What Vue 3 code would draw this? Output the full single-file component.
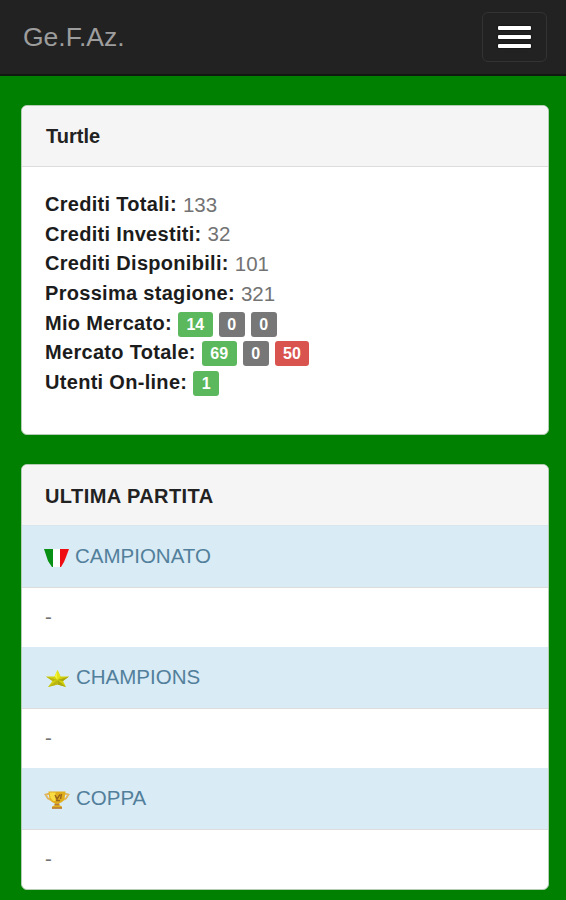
<script setup>
import { ref } from 'vue'

const squadra = ref('Turtle')

const crediti = ref([
  { id: 'totali', label: 'Crediti Totali:', valore: 133 },
  { id: 'investiti', label: 'Crediti Investiti:', valore: 32 },
  { id: 'disponibili', label: 'Crediti Disponibili:', valore: 101 },
  { id: 'stagione', label: 'Prossima stagione:', valore: 321 }
])

const mercato = ref([
  {
    id: 'mio',
    label: 'Mio Mercato:',
    badges: [
      { tipo: 'success', valore: 14 },
      { tipo: 'default', valore: 0 },
      { tipo: 'default', valore: 0 }
    ]
  },
  {
    id: 'totale',
    label: 'Mercato Totale:',
    badges: [
      { tipo: 'success', valore: 69 },
      { tipo: 'default', valore: 0 },
      { tipo: 'danger', valore: 50 }
    ]
  },
  {
    id: 'utenti',
    label: 'Utenti On-line:',
    badges: [{ tipo: 'success', valore: 1 }]
  }
])

const partite = ref([
  { id: 'campionato', nome: 'CAMPIONATO', risultato: '-' },
  { id: 'champions', nome: 'CHAMPIONS', risultato: '-' },
  { id: 'coppa', nome: 'COPPA', risultato: '-' }
])
</script>

<template>
  <nav class="navbar">
    <a class="brand">Ge.F.Az.</a>
    <button class="toggle" aria-label="Menu">
      <span class="icon-bar"></span>
      <span class="icon-bar"></span>
      <span class="icon-bar"></span>
    </button>
  </nav>

  <main class="container">
    <section class="panel">
      <h3 class="panel-heading squadra">{{ squadra }}</h3>
      <div class="panel-body">
        <div v-for="c in crediti" :key="c.id" class="riga">
          <strong>{{ c.label }}</strong>
          <span class="valore">{{ c.valore }}</span>
        </div>
        <div v-for="m in mercato" :key="m.id" class="riga">
          <strong>{{ m.label }}</strong>
          <span class="badges">
            <span v-for="(b, i) in m.badges" :key="i" class="badge" :class="b.tipo">{{ b.valore }}</span>
          </span>
        </div>
      </div>
    </section>

    <section class="panel">
      <h3 class="panel-heading ultima">ULTIMA PARTITA</h3>
      <template v-for="p in partite" :key="p.id">
        <div class="torneo" :class="p.id">
          <!-- scudetto -->
          <svg v-if="p.id === 'campionato'" class="icona" viewBox="0 0 26 20">
            <path d="M0 1H9V19H8L4 13L2 7Z" fill="#079013" />
            <path d="M9 1H16V19H9Z" fill="#fff" />
            <path d="M16 1H25L22 9L20 14L17 19H16Z" fill="#f00d12" />
          </svg>
          <!-- stella -->
          <svg v-else-if="p.id === 'champions'" class="icona" viewBox="0 0 26 20">
            <path d="M13.5 1L16.5 7.5H25L19 12L22 18L13.5 15.5L4 18L8.5 12L2 7.5H10.5Z" fill="#d2d20c" />
            <path d="M13.5 1V11L10.5 7.5Z" fill="#f4f43a" />
            <path d="M13.5 1L16.5 7.5L13.5 11Z" fill="#e4e31c" />
            <path d="M25 7.5L13.5 11L19 12ZM13.5 11L22 18L13.5 15.5Z" fill="#aaa70f" />
            <path d="M2 7.5L13.5 11L8.5 12ZM13.5 11L4 18L13.5 15.5Z" fill="#bab512" />
          </svg>
          <!-- coppa -->
          <svg v-else class="icona" viewBox="0 0 26 20">
            <path d="M6 3.5L1.5 4.5L4 8.5L9 11M20 3.5L24.5 4.5L22 8.5L17 11" fill="none" stroke="#e0b560" stroke-width="1.8" />
            <path d="M4.5 1.5H21.5L20.5 9L18 12L15 13.5V15L18 16.5V18.5H8V16.5L11 15V13.5L8 12L5.5 9Z" fill="#e0ae1c" />
            <path d="M5.5 2.5H11.5V11H9L6.5 8Z" fill="#f8dc42" />
            <path d="M11 5L13 9L16 4.5M12 10.5H16M17.5 4L16.5 9" fill="none" stroke="#98651c" stroke-width="1.4" />
            <path d="M10.5 14.5H15.5M8 18H18" stroke="#b5793f" stroke-width="1.4" />
          </svg>
          <span>{{ p.nome }}</span>
        </div>
        <div class="risultato">{{ p.risultato }}</div>
      </template>
    </section>
  </main>
</template>

<style>
body {
  margin: 0;
  background: #008000;
}
</style>

<style scoped>
.navbar {
  box-sizing: border-box;
  height: 76px;
  padding: 0 19px 0 23px;
  display: flex;
  align-items: center;
  justify-content: space-between;
  background: #222;
  border-bottom: 2px solid #101810;
  font-family: "Liberation Sans", Arial, sans-serif;
}
.brand {
  color: #9d9d9d;
  font-size: 26.5px;
  line-height: 30px;
}
.toggle {
  box-sizing: border-box;
  width: 65px;
  height: 50px;
  padding: 0;
  display: flex;
  flex-direction: column;
  align-items: center;
  justify-content: center;
  gap: 5px;
  background: transparent;
  border: 1.5px solid #333;
  border-radius: 6px;
}
.icon-bar {
  width: 33px;
  height: 4px;
  border-radius: 1px;
  background: #fff;
  box-shadow: 0 0 2px #000;
}
.container {
  padding: 29px 17px 0 21px;
  font-family: "Liberation Sans", Arial, sans-serif;
  font-size: 20.5px;
  color: #737373;
}
.panel {
  box-sizing: border-box;
  margin-bottom: 29px;
  overflow: hidden;
  border: 1px solid #b5cdb5;
  border-radius: 6px;
  background: #fff;
}
.panel-heading {
  box-sizing: border-box;
  height: 61px;
  margin: 0;
  padding: 0 24px;
  background: #f5f5f5;
  border-bottom: 1px solid #ddd;
  color: #222;
  font-size: 20px;
  line-height: 61px;
}
.ultima {
  padding: 0 23px;
  border-bottom-color: #d9e5ec;
  letter-spacing: 0.43px;
  line-height: 63px;
}
.panel-body {
  box-sizing: border-box;
  height: 267px;
  padding: 22px 23px;
}
.riga {
  display: flex;
  align-items: center;
  gap: 6px;
  height: 29.7px;
  line-height: 29.7px;
}
.riga strong {
  padding-top: 2px;
  color: #1c1c1c;
  font-size: 20px;
  letter-spacing: 0.3px;
}
.valore {
  padding-top: 1px;
}
.badges {
  display: flex;
  gap: 6px;
  padding-top: 3px;
}
.badge {
  padding: 0 8.5px;
  height: 25px;
  border-radius: 3px;
  color: #fff;
  font-size: 16px;
  font-weight: bold;
  line-height: 26px;
}
.success { background: #5cb85c; }
.default { background: #777; }
.danger { background: #d9534f; }
.torneo {
  box-sizing: border-box;
  height: 61.5px;
  padding: 0 22px 1px;
  display: flex;
  align-items: center;
  gap: 5px;
  background: #d9ebf5;
  border-bottom: 1px solid #ddd;
  color: #527f9b;
}
.champions,
.coppa {
  gap: 6px;
}
.icona {
  width: 26px;
  height: 20px;
  padding-top: 4px;
}
.risultato {
  box-sizing: border-box;
  height: 59.5px;
  padding: 0 23px;
  line-height: 57px;
}
</style>
